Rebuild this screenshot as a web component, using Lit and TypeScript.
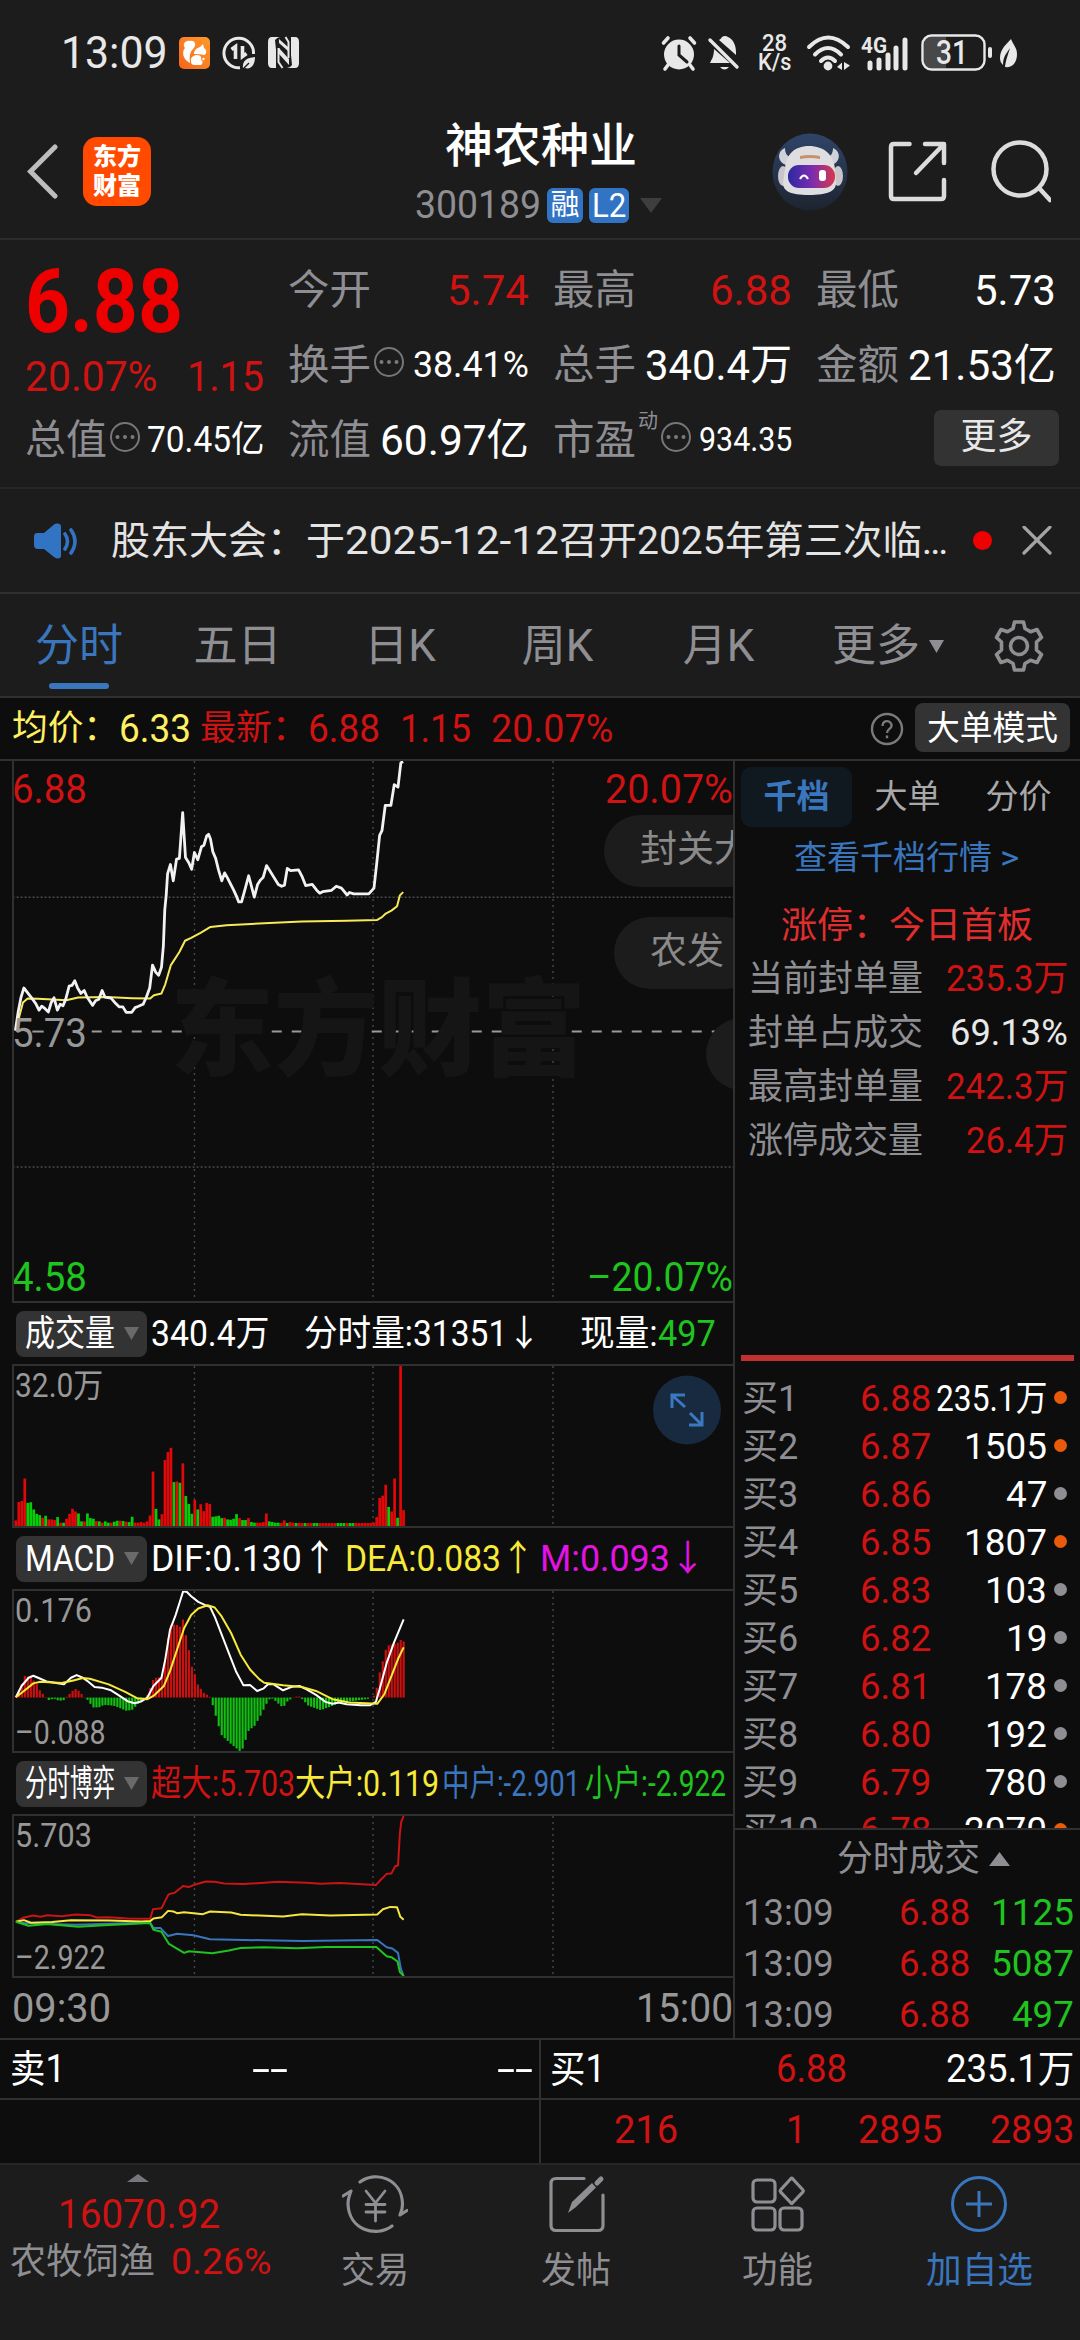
/**
 * Intraday quote page: header, key figures, time-share charts and order book
 */

import { LitElement, css, html, svg } from "lit";
import { customElement, property, query } from "lit/decorators.js";

interface BookRow {
  level: string;
  price: string;
  volume: string;
  width: number;
  hot?: boolean;
}

const BOOK: BookRow[] = [
  { level: "买1", price: "6.88", volume: "235.1万", width: 111, hot: true },
  { level: "买2", price: "6.87", volume: "1505", width: 83, hot: true },
  { level: "买3", price: "6.86", volume: "47", width: 41 },
  { level: "买4", price: "6.85", volume: "1807", width: 83, hot: true },
  { level: "买5", price: "6.83", volume: "103", width: 62 },
  { level: "买6", price: "6.82", volume: "19", width: 41 },
  { level: "买7", price: "6.81", volume: "178", width: 62 },
  { level: "买8", price: "6.80", volume: "192", width: 62 },
  { level: "买9", price: "6.79", volume: "780", width: 62 },
  { level: "买10", price: "6.78", volume: "2070", width: 83, hot: true },
];

const TICKS = [
  { time: "13:09", price: "6.88", volume: "1125", width: 83 },
  { time: "13:09", price: "6.88", volume: "5087", width: 83 },
  { time: "13:09", price: "6.88", volume: "497", width: 62 },
];

const LIMIT_ROWS = [
  { label: "当前封单量", value: "235.3万", width: 122, tone: "red" },
  { label: "封单占成交", value: "69.13%", width: 118, tone: "light" },
  { label: "最高封单量", value: "242.3万", width: 122, tone: "red" },
  { label: "涨停成交量", value: "26.4万", width: 102, tone: "red" },
];

const PRICE =
  "32,772 38,720 44,680 50,655 56,665 68,685 76,700 82,716 88,705 95,712 102,721 108,695 114,682 121,716 127,700 133,704 139,685 146,650 152,648 158,635 164,655 171,670 178,662 184,680 196,703 202,690 209,686 216,662 222,680 235,683 245,698 252,707 260,707 267,722 279,722 286,709 292,706 303,700 310,680 317,655 323,592 330,612 336,620 342,598 346,540 349,440 352,400 355,340 361,315 367,360 374,300 380,298 387,172 393,296 400,310 406,328 412,282 419,302 427,266 432,262 438,236 442,232 446,245 451,280 457,298 463,330 470,360 476,338 482,352 489,370 495,385 502,405 506,418 512,418 520,380 527,346 533,375 539,405 546,370 552,358 558,350 565,318 571,330 578,345 590,370 597,375 603,372 609,326 616,332 633,330 641,350 648,373 662,370 671,385 678,394 684,390 703,386 713,375 724,380 736,399 741,392 750,396 782,396 793,380 799,310 805,235 810,222 817,152 829,152 836,95 844,102 850,35 855,32";
const AVERAGE =
  "32,772 40,735 48,695 58,684 80,685 140,689 165,681 225,680 280,683 318,684 326,675 342,670 350,645 362,592 380,556 392,525 405,517 425,503 446,487 480,482 560,477 640,472 735,470 799,468 810,460 818,450 830,442 842,430 848,400 855,391";
const DIF =
  "33,1194 45,1160 60,1135 70,1129 85,1138 98,1146 115,1150 135,1155 150,1135 162,1127 175,1135 185,1145 200,1163 215,1165 235,1173 250,1187 270,1206 285,1212 300,1206 312,1195 325,1160 342,1135 350,1080 360,990 372,945 382,900 388,873 396,875 405,888 420,905 435,915 445,920 455,950 470,1005 485,1060 500,1115 516,1158 530,1157 545,1175 558,1168 568,1155 580,1155 600,1173 620,1162 635,1160 650,1170 670,1187 690,1208 705,1214 718,1210 735,1215 765,1218 785,1218 797,1208 805,1170 820,1090 835,1030 856,958";
const DEA =
  "33,1194 50,1175 70,1152 85,1147 130,1151 155,1143 175,1136 190,1138 230,1155 265,1178 290,1197 312,1200 325,1190 347,1160 360,1115 375,1050 390,985 405,945 420,925 440,915 455,922 470,950 490,1000 510,1065 530,1110 550,1140 560,1150 600,1158 640,1163 670,1175 705,1200 740,1210 800,1214 815,1185 830,1130 845,1075 856,1043";
const FLOWS = [
  { color: "#3a76bd", points: "33,548 50,552 100,555 160,557 230,554 318,550 325,567 340,567 356,591 375,584 410,589 445,601 560,604 640,606 800,603 820,625 832,629 844,642 850,690 856,712" },
  { color: "#c81414", points: "33,548 50,535 70,529 85,533 100,528 130,531 160,526 190,528 205,535 230,534 270,538 318,539 324,510 342,507 357,465 370,460 388,440 400,443 412,436 436,426 455,427 475,432 515,434 560,430 590,427 650,430 680,433 720,431 797,437 808,420 820,403 830,402 838,380 844,378 848,280 851,245 856,228" },
  { color: "#f5e642", points: "33,548 50,543 65,551 110,549 150,543 230,544 300,547 318,546 325,538 343,534 356,515 368,517 375,522 390,519 430,525 445,517 490,520 510,527 600,532 640,525 700,529 800,526 812,510 828,503 842,504 849,533 856,542" },
  { color: "#1fc41f", points: "33,548 60,560 100,555 165,563 230,558 318,552 325,572 342,578 358,615 390,642 400,637 450,643 485,635 510,627 560,625 630,628 690,624 798,624 820,652 830,655 843,668 848,700 856,712" },
];

// one entry per minute, r = up, g = down
const VOLUME =
  "r17 r73 r76 r144 g70 g72 g50 g37 g33 r25 g31 r20 r20 r18 g27 r10 g10 r22 r37 r52 r44 g38 g14 r14 g38 g24 g22 r15 g14 r10 g14 g10 r10 g13 g16 r16 g15 r13 g12 g28 r10 r10 r12 r10 r14 r32 r165 g52 g20 r36 r200 r224 r237 g133 r135 g131 r190 g91 g67 g37 r79 g50 r66 r45 r70 r67 g28 g29 g31 g24 r25 g20 g19 g22 g36 r24 g18 g18 r24 g12 g10 r10 r10 r12 r38 g14 g12 g10 g10 r9 r17 g9 r12 r10 g9 r9 r9 g9 r9 r9 g9 g9 r9 r9 r9 r9 r9 r9 g9 g9 g9 r9 g9 g9 r9 r9 r9 r9 r9 r9 r10 r27 r85 r92 r125 g58 r44 r144 g25 r485 r48".split(" ");

const MACD_KNOTS = [
  [33, 5], [45, 38], [51, 66], [63, 62], [76, 45], [82, 25], [88, 14], [95, 4], [101, -8], [114, -3], [120, -8], [133, -10], [139, 0], [146, 10], [158, 27],
  [165, 22], [177, 3], [184, -5], [197, -30], [209, -30], [220, -22], [241, -25], [254, -32], [267, -40], [279, -38], [292, -20], [305, -3], [311, 5],
  [317, 25], [323, 52], [330, 60], [342, 62], [349, 100], [355, 175], [361, 220], [374, 222], [380, 210], [387, 240], [393, 195], [400, 145], [406, 95],
  [412, 75], [419, 40], [431, 15], [444, 4], [451, -24], [463, -85], [470, -115], [489, -140], [508, -162], [514, -155], [520, -130], [527, -100], [540, -85],
  [552, -55], [565, -18], [571, -5], [578, -3], [597, -27], [603, -25], [609, -12], [618, -3], [624, 3], [635, 3], [641, -5], [654, -25], [680, -38],
  [705, -25], [718, -17], [740, -12], [780, -4], [793, 6], [799, 30], [805, 75], [812, 112], [818, 145], [824, 158], [843, 166], [850, 175], [856, 170],
];

function macdAt(x: number): number {
  for (let i = 1; i < MACD_KNOTS.length; i++) {
    const [x0, y0] = MACD_KNOTS[i - 1];
    const [x1, y1] = MACD_KNOTS[i];
    if (x <= x1) return y0 + ((y1 - y0) * (x - x0)) / (x1 - x0);
  }
  return 170;
}

/** Text squeezed horizontally into a fixed width. */
@customElement("fit-text")
export class FitText extends LitElement {
  static styles = css`
    :host {
      display: inline-block;
      flex: none;
      white-space: nowrap;
    }

    .text {
      display: inline-block;
      transform-origin: left center;
    }
  `;

  @property({ type: Number })
  width = 0;

  @property({ type: String })
  text = "";

  @query(".text")
  private _text!: HTMLElement;

  updated() {
    this.style.width = `${this.width}px`;
    const natural = this._text.offsetWidth;
    if (natural) {
      this._text.style.transform = `scaleX(${this.width / natural})`;
    }
  }

  render() {
    return html`<span class="text">${this.text}</span>`;
  }
}

const fit = (text: string, width: number, cls = "") =>
  html`<fit-text class=${cls} .text=${text} .width=${width}></fit-text>`;

@customElement("app-root")
export class AppRoot extends LitElement {
  static styles = css`
    :host {
      display: block;
      width: 1080px;
      height: 2340px;
      overflow: hidden;
      background: #1c1c1c;
      color: #fff;
      font-family: Roboto, "Noto Sans CJK SC", sans-serif;
      font-size: 36px;
      line-height: 48px;
    }

    * {
      box-sizing: border-box;
    }

    svg {
      display: block;
      flex: none;
    }

    .red { color: #cf1212; }
    .green { color: #1fc41f; }
    .yellow { color: #f7ea38; }
    .magenta { color: #e412e4; }
    .blue { color: #3a76bd; }
    .gray { color: #8e8e93; }
    .light { color: #e8e8e8; }

    .status {
      display: flex;
      align-items: center;
      height: 105px;
      padding-left: 61px;
      color: #e8e8e8;
      font-size: 44px;
    }
    .status svg { margin-left: 12px; }
    .status .time { margin-right: -1px; }
    .status .right {
      display: flex;
      align-items: center;
      margin-left: auto;
      margin-right: 62px;
    }
    .status .right svg { margin-left: 0; overflow: visible; }
    .status .right .battery { margin-left: 14px; }
    .speed {
      display: flex;
      flex-direction: column;
      align-items: center;
      width: 36px;
      margin: 0 14px 0 15px;
      font-size: 23px;
      line-height: 19px;
      font-weight: 500;
    }

    .header {
      display: grid;
      grid-template-columns: 27px 56px 68px 1fr auto;
      height: 135px;
      border-bottom: 2px solid #2c2c2c;
      align-items: center;
    }
    .logo {
      display: flex;
      flex-direction: column;
      align-items: center;
      justify-content: center;
      width: 68px;
      height: 69px;
      border-radius: 14px;
      background: #ff4a00;
      font-size: 24px;
      line-height: 29px;
      font-weight: 900;
    }
    .name {
      padding-left: 264px;
      align-self: start;
      margin-top: 16px;
    }
    .name .title {
      padding-left: 30px;
      font-size: 47px;
      line-height: 50px;
      font-weight: 500;
    }
    .code {
      display: flex;
      align-items: center;
      gap: 6px;
      margin-top: 9px;
      font-size: 38px;
      line-height: 50px;
    }
    .badge {
      display: flex;
      justify-content: center;
      height: 35px;
      width: 36px;
      border-radius: 6px;
      background: #3274c4;
      font-size: 29px;
      line-height: 35px;
    }
    .badge.wide { width: 40px; font-size: 33px; }
    .caret { margin-left: 5px; }
    .actions {
      display: flex;
      align-items: center;
      margin-right: 29px;
    }

    .stats {
      display: grid;
      grid-template-columns: 239px 241px 239px 240px;
      column-gap: 24px;
      height: 249px;
      padding: 12px 0 0 25px;
      border-bottom: 2px solid #272727;
    }
    .col > div {
      display: flex;
      align-items: center;
      justify-content: space-between;
      height: 75px;
      font-size: 43px;
    }
    .col .label { color: #8e8e93; font-size: 41px; }
    .col .more-info { margin: -5px auto 0 2px; }
    .col .small { font-size: 36px; }
    .col .tiny { font-size: 33px; }
    .col > .last {
      height: 97px;
      align-items: start;
      padding-top: 1px;
      font-size: 89px;
      line-height: 98px;
      font-weight: 700;
      color: #ee0000;
    }
    .col > .change { height: 53px; color: #cf1212; }
    .dyn { font-size: 20px; color: #8e8e93; margin: -38px 0 0 2px; line-height: 20px; }
    .col > .btn-row { justify-content: flex-end; }
    .more-btn {
      width: 125px;
      height: 56px;
      margin: -3px -3px 0 0;
      border-radius: 7px;
      background: #333;
      color: #e8e8e8;
      font-size: 36px;
      line-height: 54px;
      text-align: center;
    }

    .notice {
      display: flex;
      align-items: center;
      height: 105px;
      padding-left: 34px;
      border-bottom: 2px solid #303030;
      color: #e4e4e4;
      font-size: 39px;
    }
    .notice .msg { margin-left: 33px; }
    .notice .dot {
      width: 19px;
      height: 19px;
      margin: 0 30px 0 25px;
      border-radius: 50%;
      background: #f00000;
    }

    .tabs {
      display: grid;
      grid-template-columns: 158px 159px 166px 149px 173px 153px 1fr;
      height: 104px;
      border-bottom: 2px solid #303030;
      color: #8e8e93;
      font-size: 44px;
      line-height: 104px;
      text-align: center;
    }
    .tab.active {
      display: flex;
      flex-direction: column;
      align-items: center;
      color: #3a76bd;
    }
    .tab.active::after {
      content: "";
      width: 60px;
      height: 6px;
      margin-top: -15px;
      border-radius: 3px;
      background: #3a76bd;
    }
    .tab.more { display: flex; align-items: center; gap: 9px; padding-left: 27px; }
    .tab.gear { display: flex; align-items: center; padding-left: 34px; }

    .body { background: #0d0d0d; }

    .summary {
      display: flex;
      align-items: center;
      height: 63px;
      padding-left: 12px;
      border-bottom: 2px solid #303030;
      font-size: 38px;
    }
    .summary .cn { font-size: 35px; }
    .summary .yellow { color: #fff061; }
    .summary .help { margin-left: auto; }
    .mode {
      display: flex;
      align-items: center;
      justify-content: center;
      width: 155px;
      height: 49px;
      margin: -2px 10px 0 11px;
      border-radius: 8px;
      background: #333;
      font-size: 34px;
    }

    .main {
      display: grid;
      grid-template-columns: 735px 345px;
      height: 1277px;
    }
    .left { border-right: 2px solid #303030; }

    .plot {
      position: relative;
      margin-left: 12px;
      height: 164px;
      border: 2px solid #303030;
      border-right: 0;
      overflow: hidden;
      color: #989898;
      font-size: 33px;
      line-height: 36px;
    }
    .plot.price { height: 542px; border-top: 0; font-size: 41px; }
    .plot > svg { width: 100%; height: 100%; }
    .lab { position: absolute; left: -2px; }
    .lab.r { left: auto; right: 0; }
    .lab.top { top: 2px; }
    .lab.bottom { bottom: 0; }
    .price .lab.top { top: 10px; }
    .price .lab.mid { top: 254px; }
    .price .lab.bottom { bottom: 6px; }
    .plot:not(.price) .lab { left: 1px; }
    .mark {
      position: absolute;
      left: 156px;
      top: 200px;
      font-size: 106px;
      line-height: 140px;
      font-weight: 900;
      color: #151515;
    }
    .pill {
      position: absolute;
      height: 72px;
      border-radius: 36px;
      background: #1c1c1c;
      color: #8a8a8a;
      font-size: 37px;
      line-height: 70px;
      padding-left: 36px;
      white-space: nowrap;
    }
    .pill.a { left: 590px; top: 54px; width: 220px; }
    .pill.b { left: 600px; top: 156px; width: 147px; }
    .pill.c { left: 692px; top: 257px; width: 147px; }
    .expand { position: absolute; left: 639px; top: 9px; }
    .plot > .expand { width: 68px; height: 70px; }

    .ind {
      display: flex;
      align-items: center;
      height: 61px;
      padding-left: 16px;
      font-size: 36px;
    }
    .pick {
      display: flex;
      align-items: center;
      width: 131px;
      height: 46px;
      margin-right: 4px;
      padding-left: 9px;
      border-radius: 8px;
      background: #333;
    }
    .pick svg { margin-left: 9px; }
    .times {
      display: flex;
      justify-content: space-between;
      padding: 6px 0 0 12px;
      color: #989898;
      font-size: 41px;
    }

    .right { display: flex; flex-direction: column; }
    .right.status-icons { flex-direction: row; }
    .seg {
      display: grid;
      grid-template-columns: repeat(3, 111px);
      padding: 6px 0 0 6px;
      font-size: 33px;
      line-height: 60px;
      text-align: center;
      color: #a8a8a8;
    }
    .seg .on {
      border-radius: 10px;
      background: #101820;
      color: #3a76bd;
      font-weight: 700;
    }
    .link { padding: 7px 0 0 59px; color: #3a76bd; font-size: 33px; }
    .limit { padding: 20px 0 0 46px; color: #e02e2e; font-size: 36px; }
    .limit-rows { padding: 2px 12px 0 13px; }
    .limit-rows > div {
      display: flex;
      justify-content: space-between;
      align-items: center;
      height: 54px;
      font-size: 36px;
    }
    .bar { height: 6px; margin: 187px 6px 0 6px; background: #c23131; }
    .book {
      height: 469px;
      padding-top: 14px;
      overflow: hidden;
      border-bottom: 2px solid #303030;
    }
    .book > div {
      display: grid;
      grid-template-columns: 118px 72px 1fr 13px;
      align-items: center;
      height: 48px;
      padding: 0 13px 0 7px;
    }
    .book .qty, .ticks .qty { display: flex; justify-content: flex-end; padding-right: 7px; }
    .book i {
      width: 13px;
      height: 13px;
      margin-bottom: 4px;
      border-radius: 50%;
      background: #8e8e93;
    }
    .book i.hot { background: #ea5a0c; }
    .ticks-title {
      display: flex;
      align-items: center;
      justify-content: flex-start;
      gap: 9px;
      height: 57px;
      padding-left: 102px;
      color: #8e8e93;
      font-size: 36px;
    }
    .ticks > div {
      display: grid;
      grid-template-columns: 156px 71px 1fr;
      align-items: center;
      height: 51px;
      padding-left: 8px;
    }
    .ticks .qty { padding-right: 6px; }

    .quote-row {
      display: grid;
      grid-template-columns: 541px 1fr;
      height: 60px;
      border-top: 2px solid #303030;
    }
    .quote-row.tall { height: 65px; }
    .quote-row > div {
      display: grid;
      grid-template-columns: 55px 223px 1fr;
      justify-items: end;
      align-items: center;
      padding: 0 6px 0 10px;
      font-size: 38px;
      border-right: 2px solid #303030;
    }
    .quote-row > div + div {
      grid-template-columns: 55px 242px 1fr;
      padding: 0 6px 0 9px;
      border: 0;
    }
    .quote-row.tall > div + div {
      grid-template-columns: 137px 128px 136px 132px;
      padding: 0 0 4px;
    }

    .nav {
      display: grid;
      grid-template-columns: 274px repeat(4, 201.5px);
      height: 177px;
      border-top: 2px solid #262626;
      background: #1c1c1c;
      color: #8e8e93;
    }
    .nav .index { padding: 9px 0 0 10px; }
    .nav .index .tri { margin-left: 117px; }
    .nav .index .num { display: block; padding-left: 48px; margin-top: 8px; font-size: 41px; }
    .nav .index .row { display: flex; justify-content: space-between; padding-right: 2px; }
    .nav .item {
      display: flex;
      flex-direction: column;
      align-items: center;
      gap: 12px;
      padding-top: 8px;
    }
  `;

  private _info() {
    return html`<svg class="more-info" width="32" height="32" viewBox="0 0 32 32" fill="#7b7b7f">
      <circle cx="16" cy="16" r="14" fill="none" stroke="#77777b" stroke-width="2" />
      <circle cx="8.5" cy="16" r="2" /><circle cx="16" cy="16" r="2" /><circle cx="23.5" cy="16" r="2" />
    </svg>`;
  }

  private _grid(top: number, height: number) {
    return svg`${[412, 791, 1173].map(
      (x) => svg`<path d="M${x} ${top}v${height}" stroke="#484848" stroke-width="1.4" stroke-dasharray="2 4" vector-effect="non-scaling-stroke" />`
    )}`;
  }

  private _line(points: string, color: string, width: number) {
    return svg`<polyline points=${points} fill="none" stroke=${color} stroke-width=${width} stroke-linejoin="round" vector-effect="non-scaling-stroke" />`;
  }

  private _volumeBars() {
    return VOLUME.map((bar, i) => {
      const h = Number(bar.slice(1));
      return svg`<rect x=${30 + i * 6.33} y=${682 - h} width="5.8" height=${h} fill=${bar[0] === "r" ? "#e00808" : "#08cc08"} />`;
    });
  }

  private _macdBars() {
    return VOLUME.map((_, i) => {
      const x = 33 + i * 6.33;
      const v = macdAt(x);
      return svg`<rect x=${x - 2.2} y=${v > 0 ? 1195 - v : 1195} width="4.600" height=${Math.abs(v)} fill=${v > 0 ? "#cc1010" : "#12c012"} />`;
    });
  }

  private _pick(label: string) {
    return html`<div class="pick">
      ${fit(label, 90)}
      <svg width="15" height="13" viewBox="0 0 15 13"><path d="M0 0h15L7.5 13z" fill="#6a6a6a" /></svg>
    </div>`;
  }

  private _status() {
    return html`
      <div class="status">
        ${fit("13:09", 107, "time")}
        <svg width="31" height="32" viewBox="0 0 31 32">
          <defs>
            <linearGradient id="uc" x1="1" y1="0" x2="0" y2="1">
              <stop offset="0" stop-color="#ff9a2b" /><stop offset="1" stop-color="#f4661a" />
            </linearGradient>
          </defs>
          <rect width="31" height="32" rx="5" fill="url(#uc)" />
          <path d="M11 26C3 22 3 14 6 11c-3-3 0-8 5-7 4-1 7 3 4 7-3 3-5 5-4 15z" fill="#fff" />
          <path d="M15 17c0-4 3-6 6-7l3-3 1 4c3 2 3 6 0 7-3-1-7-1-10-1z" fill="#fff" />
          <path d="M12 25c-1-5 3-7 6-7 4 0 5 3 4 5 2 0 2 4 0 5h-6c-3 0-4-1-4-3z" fill="#fff" />
          <circle cx="24.5" cy="22" r="1.2" fill="#fff" />
        </svg>
        <svg width="34" height="36" viewBox="0 0 34 36" fill="none" stroke="#e8e8e8" stroke-width="3">
          <path d="M31.5 19A14.8 14.8 0 1 0 18 32.8" />
          <path d="M9.5 14.5l4-3v12.5M20.5 11v10.5l4-3" stroke-width="3.6" />
          <path d="M21 34c-1-9 4-11 12-12 0 8-4 13-10 11z" fill="#e8e8e8" stroke="none" />
          <path d="M20 35l7-7" stroke="#1c1c1c" stroke-width="1.5" />
        </svg>
        <svg width="31" height="33" viewBox="0 0 31 33">
          <path d="M4 1Q0 1 0 6v21q0 5 4 5h4V14L7 4q3-3 5-3z" fill="#e8e8e8" />
          <path d="M27 32q4 0 4-5V6q0-5-4-5h-4v18l1 10q-2 3-5 3z" fill="#e8e8e8" />
          <path d="M11 3l9 8v4l-9-8zM11 12l10 11v6L11 18z" fill="#e8e8e8" />
          <path d="M10.500 12v14l4 6M20.500 22V6l-3-5" fill="none" stroke="#e8e8e8" stroke-width="2" />
        </svg>
        <div class="right status-icons">
          <svg width="36" height="36" viewBox="0 0 36 36" stroke="#e8e8e8" stroke-linecap="round" stroke-width="3.6">
            <circle cx="18" cy="19.5" r="15" fill="#e8e8e8" stroke="none" />
            <path d="M2.5 8L7 3M33.5 8L29 3M7 30l-3 4M29 30l3 4" />
            <path d="M18 11v9l8 7" fill="none" stroke="#1c1c1c" stroke-width="3" />
          </svg>
          <svg width="44" height="36" viewBox="-12 0 44 36">
            <path d="M10 5q2-1 3-3 3-2 6 0c5 2 8 8 8 15v3z" fill="#e8e8e8" />
            <path d="M5 14l16 14H1c2-4 4-7 4-14z" fill="#e8e8e8" />
            <path d="M11 32h9q-4.500 5-9 0z" fill="#e8e8e8" />
            <path d="M1 5l27 27" stroke="#e8e8e8" stroke-width="3.4" stroke-linecap="round" />
          </svg>
          <div class="speed">${fit("28", 25)}${fit("K/s", 33)}</div>
          <svg width="46" height="36" viewBox="0 0 46 36" fill="none" stroke="#e8e8e8" stroke-width="4" stroke-linecap="round">
            <path d="M3 12Q22 -7 42 12M9 19.500q13-13 26 0M15 26q7-7 14 0" />
            <circle cx="22" cy="31" r="4.400" fill="#e8e8e8" stroke="none" />
            <path d="M31 32l5-4.500v7.500M38 27v8l6-4.500" fill="#e8e8e8" stroke="none" />
          </svg>
          <svg width="53" height="36" viewBox="-10 0 53 36" stroke="#e8e8e8" stroke-width="5" stroke-linecap="round">
            <text x="-1" y="18" font-size="22" font-weight="700" fill="#e8e8e8" stroke="none" textLength="26" lengthAdjust="spacingAndGlyphs">4G</text>
            <path d="M8 28v5M17 25v8M26 20v13M34 13v20M43 5v28" />
          </svg>
          <svg class="battery" width="75" height="37" viewBox="-2 0 75 37">
            <path d="M10 3h15v31H10q-7 0-7-7V10q0-7 7-7z" fill="#484848" />
            <rect x="1.500" y="1.500" width="62" height="34" rx="9" fill="none" stroke="#e8e8e8" stroke-width="2.400" />
            <rect x="67" y="13" width="4" height="11" rx="2" fill="#e8e8e8" />
            <text x="15" y="30" font-size="33" fill="#e8e8e8" font-weight="500" textLength="32" lengthAdjust="spacingAndGlyphs">31</text>
          </svg>
          <svg width="24" height="30" viewBox="-6 0 24 30">
            <path d="M11 1c-3 4-11 9-11 19 0 3 1 5 3 7C3 18 7 15 10 10 8 17 6 21 5 29c7 1 12-4 12-13 0-6-3-8-6-15z" fill="#e8e8e8" />
          </svg>
        </div>
      </div>
    `;
  }

  private _header() {
    return html`
      <div class="header">
        <span></span>
        <svg width="32" height="56" viewBox="0 0 32 56" fill="none" stroke="#bdbdbd" stroke-width="5" stroke-linecap="round">
          <path d="M28 3L3.500 27.500 28 52" />
        </svg>
        <div class="logo"><span>东方</span><span>财富</span></div>
        <div class="name">
          <div class="title">${fit("神农种业", 192)}</div>
          <div class="code">
            ${fit("300189", 126, "gray")}
            <span class="badge">融</span>
            <span class="badge wide">${fit("L2", 34)}</span>
            <svg class="caret" width="22" height="15" viewBox="0 0 22 15"><path d="M0 0h22L11 15z" fill="#3e3e3e" /></svg>
          </div>
        </div>
        <div class="actions">
          <svg width="76" height="78" viewBox="0 0 76 78">
            <defs>
              <linearGradient id="sky" x1="0" y1="0" x2="0" y2="1">
                <stop offset="0" stop-color="#304468" /><stop offset="1" stop-color="#1d2430" />
              </linearGradient>
              <linearGradient id="visor">
                <stop offset="0" stop-color="#2a2aa0" /><stop offset=".5" stop-color="#7a2cb0" /><stop offset="1" stop-color="#d8384c" />
              </linearGradient>
            </defs>
            <ellipse cx="38" cy="39" rx="37.500" ry="38.500" fill="url(#sky)" />
            <path d="M13 15c-8 3-8 14 1 17l6-8c-5 0-7-4-7-9zM61 15c8 3 8 14-1 17l-6-8c5 0 7-4 7-9z" fill="#cfd2d8" />
            <ellipse cx="11" cy="43" rx="5" ry="10" fill="#c9c6cb" />
            <ellipse cx="66" cy="43" rx="5" ry="10" fill="#c9c6cb" />
            <path d="M13 36C14 22 22 13 37 13s25 9 26 23l1 14c0 8-8 12-27 12s-26-4-26-12z" fill="#dedde0" />
            <path d="M28 23q9-2 20 0v3q-10-2-20 0z" fill="#c9916b" />
            <rect x="16" y="32" width="47" height="23" rx="11" fill="url(#visor)" />
            <path d="M28 46q4-7 8 0" fill="none" stroke="#fff" stroke-width="2.200" />
            <rect x="47" y="37" width="7" height="11" rx="3" fill="#fff" />
          </svg>
          <svg width="100" height="62" viewBox="-41 0 100 62" fill="none" stroke="#dcdcdc" stroke-width="4.500" stroke-linecap="round" stroke-linejoin="round">
            <path d="M20.500 3H5q-3 0-3 3v49q0 3 3 3h47q3 0 3-3V39M36 3h19v19M54 4L27 32" />
          </svg>
          <svg width="103" height="66" viewBox="-42 0 103 66" fill="none" stroke="#dcdcdc" stroke-width="4.500" stroke-linecap="round">
            <circle cx="30" cy="30" r="26.500" /><path d="M49 49l11 12" />
          </svg>
        </div>
      </div>
    `;
  }

  private _stats() {
    return html`
      <div class="stats">
        <div class="col">
          <div class="last">${fit("6.88", 158)}</div>
          <div class="change">${fit("20.07%", 133)}${fit("1.15", 77)}</div>
          <div><span class="label">${fit("总值", 82)}</span>${this._info()}<span class="small">${fit("70.45亿", 117)}</span></div>
        </div>
        <div class="col">
          <div><span class="label">${fit("今开", 83)}</span>${fit("5.74", 82, "red")}</div>
          <div><span class="label">${fit("换手", 83)}</span>${this._info()}<span class="small">${fit("38.41%", 116)}</span></div>
          <div><span class="label">${fit("流值", 83)}</span>${fit("60.97亿", 149)}</div>
        </div>
        <div class="col">
          <div><span class="label">${fit("最高", 83)}</span>${fit("6.88", 82, "red")}</div>
          <div><span class="label">${fit("总手", 83)}</span>${fit("340.4万", 147)}</div>
          <div><span class="label">${fit("市盈", 83)}</span><span class="dyn">动</span>${this._info()}<span class="tiny">${fit("934.35", 93)}</span></div>
        </div>
        <div class="col">
          <div><span class="label">${fit("最低", 83)}</span>${fit("5.73", 82)}</div>
          <div><span class="label">${fit("金额", 83)}</span>${fit("21.53亿", 148)}</div>
          <div class="btn-row"><div class="more-btn">更多</div></div>
        </div>
      </div>
    `;
  }

  private _notice() {
    return html`
      <div class="notice">
        <svg width="44" height="36" viewBox="0 0 44 36">
          <path d="M3 10h7L20 1.500q2-1.500 4-1 3 .5 3 3v29q0 3-3 3-2 0-4-1.500L10 26H4q-4 0-4-4v-8q0-4 3-4z" fill="#3274c4" />
          <path d="M31 11q5 7 0 15M37 7q8 11 0 23" fill="none" stroke="#3274c4" stroke-width="3.600" stroke-linecap="round" />
        </svg>
        <span class="msg">${fit("股东大会：", 195)}${fit("于", 39)}${fit("2025-12-12", 214)}${fit("召开", 78)}${fit("2025", 88)}${fit("年第三次临…", 223)}</span>
        <span class="dot"></span>
        <svg width="30" height="30" viewBox="0 0 30 30" stroke="#a4a4a4" stroke-width="3.200" stroke-linecap="round"><path d="M2 1l26 26M28 1L2 27" /></svg>
      </div>
    `;
  }

  private _tabs() {
    return html`
      <div class="tabs">
        <div class="tab active">分时</div>
        <div class="tab">五日</div>
        <div class="tab">日K</div>
        <div class="tab">周K</div>
        <div class="tab">月K</div>
        <div class="tab more">更多<svg width="15" height="13" viewBox="0 0 15 13"><path d="M0 0h15L7.500 13z" fill="#8e8e93" /></svg></div>
        <div class="tab gear">
          <svg width="54" height="54" viewBox="0 0 54 54" fill="none" stroke="#8e8e93" stroke-width="3.600" stroke-linejoin="round">
            <path d="M22.500 3h9l1.500 6.500 5.500 3.200L45 10.500l4.500 8-5 4.500v8l5 4.500-4.500 8-6.500-2.200-5.500 3.200L31.500 51h-9L21 44.500l-5.500-3.200L9 43.500l-4.500-8 5-4.500v-8l-5-4.500 4.500-8 6.500 2.200L21 9.500z" />
            <circle cx="27" cy="27" r="8.500" />
          </svg>
        </div>
      </div>
    `;
  }

  private _left() {
    return html`
      <div class="left">
        <div class="plot price">
          <span class="mark">${fit("东方财富", 416)}</span>
          <svg viewBox="29 30 1526 1487" preserveAspectRatio="none">
            ${this._grid(30, 1490)}
            <path d="M26 405h1530M26 1148h1530" stroke="#484848" stroke-width="1.400" stroke-dasharray="2 2" vector-effect="non-scaling-stroke" />
            <path d="M194 775h1361" stroke="#9a9a9a" stroke-width="2" stroke-dasharray="10 10" vector-effect="non-scaling-stroke" />
            <path d="M68 775h24" stroke="#9a9a9a" stroke-width="2" vector-effect="non-scaling-stroke" />
            ${this._line(AVERAGE, "#f7e95a", 2)} ${this._line(PRICE, "#f2f2f2", 2.8)}
          </svg>
          <span class="lab top red">${fit("6.88", 75)}</span>
          <span class="lab r top red">${fit("20.07%", 128)}</span>
          <span class="lab mid">${fit("5.73", 75)}</span>
          <span class="lab bottom green">${fit("4.58", 75)}</span>
          <span class="lab r bottom green">${fit("–20.07%", 146)}</span>
          <div class="pill a">封关大</div>
          <div class="pill b">农发</div>
          <div class="pill c"></div>
        </div>

        <div class="ind">
          ${this._pick("成交量")} ${fit("340.4万", 118)}
          <span style="width:35px"></span>
          ${fit("分时量:31351↓", 237)}
          <span style="width:39px"></span>
          ${fit("现量:", 78)}${fit("497", 58, "green")}
        </div>
        <div class="plot">
          <svg viewBox="29 197 1526 485" preserveAspectRatio="none">
            ${this._grid(197, 490)} ${this._volumeBars()}
          </svg>
          <span class="lab top">${fit("32.0万", 88)}</span>
          <svg class="expand" viewBox="0 0 68 70">
            <ellipse cx="34" cy="35" rx="34" ry="34.500" fill="#172a40" />
            <path d="M19 33V20h13M20 21l12 11M49 37v13H36M48 49L37 38" fill="none" stroke="#3a78c0" stroke-width="3" />
          </svg>
        </div>

        <div class="ind">
          ${this._pick("MACD")} ${fit("DIF:0.130↑", 186)}
          <span style="width:8px"></span>
          ${fit("DEA:0.083↑", 190, "yellow")}
          <span style="width:5px"></span>
          ${fit("M:0.093↓", 166, "magenta")}
        </div>
        <div class="plot">
          <svg viewBox="29 872 1526 485" preserveAspectRatio="none">
            ${this._grid(872, 490)} ${this._macdBars()} ${this._line(DIF, "#fff", 2)} ${this._line(DEA, "#f7ea38", 2)}
          </svg>
          <span class="lab top">${fit("0.176", 77)}</span>
          <span class="lab bottom">${fit("–0.088", 91)}</span>
        </div>

        <div class="ind">
          ${this._pick("分时博弈")} ${fit("超大:5.703", 144, "red")}${fit("大户:0.119", 144, "yellow")}
          <span style="width:3px"></span>
          ${fit("中户:-2.901", 138, "blue")}
          <span style="width:5px"></span>
          ${fit("小户:-2.922", 141, "green")}
        </div>
        <div class="plot">
          <svg viewBox="29 228 1526 484" preserveAspectRatio="none">
            ${this._grid(228, 490)} ${FLOWS.map((f) => this._line(f.points, f.color, 2))}
          </svg>
          <span class="lab top">${fit("5.703", 77)}</span>
          <span class="lab bottom">${fit("–2.922", 91)}</span>
        </div>
        <div class="times">${fit("09:30", 99)}${fit("15:00", 97)}</div>
      </div>
    `;
  }

  private _right() {
    return html`
      <div class="right">
        <div class="seg"><span class="on">千档</span><span>大单</span><span>分价</span></div>
        <div class="link">${fit("查看千档行情", 198)}&nbsp;${fit(">", 19)}</div>
        <div class="limit">${fit("涨停：今日首板", 252)}</div>
        <div class="limit-rows">
          ${LIMIT_ROWS.map((r) => html`<div>${fit(r.label, 175, "gray")}${fit(r.value, r.width, r.tone)}</div>`)}
        </div>
        <div class="bar"></div>
        <div class="book">
          ${BOOK.map(
            (r) => html`
              <div>
                ${fit(r.level, r.level.length > 2 ? 76 : 56, "gray")}
                ${fit(r.price, 71, "red")}
                <span class="qty">${fit(r.volume, r.width)}</span>
                <i class=${r.hot ? "hot" : ""}></i>
              </div>
            `
          )}
        </div>
        <div class="ticks-title">
          ${fit("分时成交", 143)}
          <svg width="21" height="14" viewBox="0 0 21 14"><path d="M0 14h21L10.500 0z" fill="#8e8e93" /></svg>
        </div>
        <div class="ticks">
          ${TICKS.map(
            (t) => html`
              <div>
                ${fit(t.time, 91, "gray")} ${fit(t.price, 71, "red")}
                <span class="qty">${fit(t.volume, t.width, "green")}</span>
              </div>
            `
          )}
        </div>
      </div>
    `;
  }

  private _nav() {
    return html`
      <div class="nav">
        <div class="index">
          <svg class="tri" width="22" height="8" viewBox="0 0 22 8"><path d="M0 8h22L11 0z" fill="#77777b" /></svg>
          <span class="num red">${fit("16070.92", 162)}</span>
          <div class="row">${fit("农牧饲渔", 145)}${fit("0.26%", 101, "red")}</div>
        </div>
        <div class="item">
          <svg width="66" height="62" viewBox="0 0 66 62" fill="none" stroke="#8e8e93" stroke-width="3.200" stroke-linecap="round" stroke-linejoin="round">
            <path d="M18 9C34-3 60 6 60.500 31c0 4-1 8-2.500 11l7-4.500M50 53C34 65 7 57 6 31c0-5 1-8 3-13l-8 5" />
            <path d="M24 18l9.500 12L43 18M33.500 30v18M24 31.500h19M24 39h19" stroke-width="2.800" />
          </svg>
          ${fit("交易", 68)}
        </div>
        <div class="item">
          <svg width="58" height="62" viewBox="0 0 58 62" fill="none" stroke="#8e8e93" stroke-width="3.200" stroke-linecap="round">
            <path d="M37 5.500H9q-5 0-5 5v42q0 5 5 5h42q5 0 5-5V22" />
            <path d="M21 40l4-11 20-19 4 4.500L29 34z" fill="#8e8e93" stroke="none" />
            <path d="M50 10l4-4" stroke-width="5" />
          </svg>
          ${fit("发帖", 70)}
        </div>
        <div class="item">
          <svg width="56" height="62" viewBox="0 0 56 62" fill="none" stroke="#8e8e93" stroke-width="3.200" stroke-linejoin="round">
            <rect x="3" y="7" width="22" height="22" rx="4" />
            <path d="M41 5.500q.7-.7 1.400 0L53 17q.8.9 0 1.800L42.400 30q-.7.700-1.400 0L30.500 18.800q-.8-.9 0-1.800z" />
            <rect x="3" y="35" width="22" height="22" rx="4" />
            <rect x="30" y="35" width="22" height="22" rx="4" />
          </svg>
          ${fit("功能", 71)}
        </div>
        <div class="item blue">
          <svg width="60" height="62" viewBox="0 0 60 62" fill="none" stroke="#3a76bd" stroke-width="3">
            <circle cx="30" cy="31" r="26.500" /><path d="M30 18v26M17 31h26" />
          </svg>
          ${fit("加自选", 107)}
        </div>
      </div>
    `;
  }

  render() {
    return html`
      ${this._status()} ${this._header()} ${this._stats()} ${this._notice()} ${this._tabs()}
      <div class="body">
        <div class="summary">
          <span class="cn yellow">${fit("均价：", 107)}</span>${fit("6.33", 72, "yellow")}
          <span style="width:9px"></span>
          <span class="cn red">${fit("最新：", 108)}</span>${fit("6.88", 72, "red")}
          <span style="width:20px"></span>${fit("1.15", 71, "red")}
          <span style="width:20px"></span>${fit("20.07%", 122, "red")}
          <svg class="help" width="34" height="34" viewBox="0 0 34 34" fill="none" stroke="#7a7a7a" stroke-width="2.400">
            <circle cx="17" cy="17" r="15" />
            <path d="M12.500 14c0-7 9.500-6 9 0-.3 3-4.500 3-4.500 7M17 23.500v2.800" />
          </svg>
          <div class="mode">${fit("大单模式", 131)}</div>
        </div>
        <div class="main">${this._left()} ${this._right()}</div>
        <div class="quote-row">
          <div>${fit("卖1", 55)}${fit("--", 36)}${fit("--", 36)}</div>
          <div>${fit("买1", 55)}${fit("6.88", 71, "red")}${fit("235.1万", 128)}</div>
        </div>
        <div class="quote-row tall">
          <div></div>
          <div class="red">${fit("216", 64)}${fit("1", 20)}${fit("2895", 84)}${fit("2893", 84)}</div>
        </div>
      </div>
      ${this._nav()}
    `;
  }
}

declare global {
  interface HTMLElementTagNameMap {
    "fit-text": FitText;
    "app-root": AppRoot;
  }
}
